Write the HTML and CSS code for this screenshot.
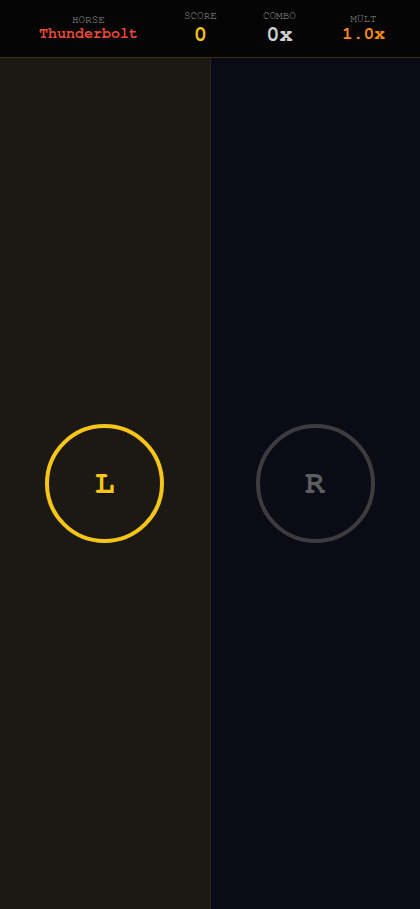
FILE: index.html
```html
<!DOCTYPE html>
<html lang="en">
<head>
<meta charset="utf-8">
<title>Horse Rhythm</title>
<link rel="stylesheet" href="styles.css">
</head>
<body>
<div class="app">
  <header class="hud">
    <div class="stat">
      <div class="label">HORSE</div>
      <div class="value horse">Thunderbolt</div>
    </div>
    <div class="stat">
      <div class="label">SCORE</div>
      <div class="value score">0</div>
    </div>
    <div class="stat">
      <div class="label">COMBO</div>
      <div class="value combo">0x</div>
    </div>
    <div class="stat">
      <div class="label">MULT</div>
      <div class="value mult">1.0x</div>
    </div>
  </header>
  <main class="lanes">
    <section class="lane lane-left">
      <div class="pad pad-active">L</div>
    </section>
    <section class="lane lane-right">
      <div class="pad pad-idle">R</div>
    </section>
  </main>
</div>
</body>
</html>
```
FILE: styles.css
```css
* { box-sizing: border-box; }
html, body {
  margin: 0;
  padding: 0;
  height: 100%;
  background: #060606;
  font-family: FreeMono, "Courier New", monospace;
}
.app {
  display: flex;
  flex-direction: column;
  height: 909px;
}
.hud {
  height: 58px;
  flex: none;
  display: flex;
  justify-content: center;
  align-items: center;
  gap: 46px;
  padding-left: 4px;
  background: #050505;
  border-bottom: 1px solid #3a3012;
}
.stat {
  display: flex;
  flex-direction: column;
  align-items: center;
}
.label {
  font-size: 11px;
  line-height: 12px;
  color: #9a9a9a;
}
.value {
  font-weight: bold;
  line-height: 1.1;
}
.horse { font-size: 15px; color: #ea4a3a; }
.score { font-size: 22px; color: #f5c518; }
.combo { font-size: 22px; color: #d0d0d0; }
.mult { font-size: 18px; color: #ff8c1a; }
.lanes {
  flex: 1;
  display: flex;
}
.lane {
  flex: 1;
  display: flex;
  align-items: center;
  justify-content: center;
}
.lane-left {
  background: #1c1914;
  border-right: 1px solid #2a2720;
}
.lane-right {
  background: #0b0b15;
}
.pad {
  width: 119px;
  height: 119px;
  border-radius: 50%;
  border: 4px solid;
  display: flex;
  align-items: center;
  justify-content: center;
  font-size: 33px;
  font-weight: bold;
}
.pad-active {
  border-color: #f5c518;
  color: #f5c518;
  text-shadow: 1px 1px 0 rgba(0, 0, 0, 0.5);
}
.pad-idle {
  border-color: #3c3c3e;
  color: #5e5e60;
}
```
